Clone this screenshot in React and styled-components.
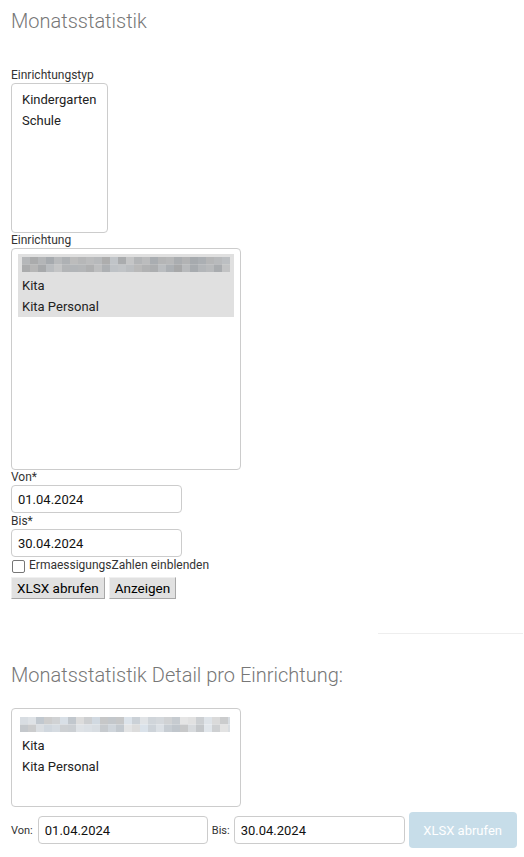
import React from "react";
import styled, { createGlobalStyle } from "styled-components";

const Global = createGlobalStyle`
  html, body { margin: 0; padding: 0; background: #fff; }
  body { font-family: Roboto, "Liberation Sans", sans-serif; font-size: 12px; color: #333; }
  * { box-sizing: border-box; }
`;

const Page = styled.div`
  width: 524px;
  padding: 0 0 40px 11px;
  display: flex;
  flex-direction: column;
  align-items: flex-start;
`;

const Title = styled.h1`
  margin: ${(p) => p.$mt}px 0 ${(p) => p.$mb}px;
  font-family: Roboto, sans-serif;
  font-weight: 300;
  font-size: 20px;
  line-height: 25px;
  color: #777;
`;

const FieldLabel = styled.label`
  display: block;
  font-size: 12px;
  line-height: 15px;
  color: #333;
`;

const ListBox = styled.div`
  width: ${(p) => p.$w}px;
  height: ${(p) => p.$h}px;
  border: 1px solid #ccc;
  border-radius: 4px;
  padding: 5px 6px;
  background: #fff;
  overflow: hidden;
`;

const Option = styled.div`
  height: 21px;
  line-height: 21px;
  padding: 0 4px;
  font-size: 13px;
  color: #222;
  white-space: nowrap;
  background: ${(p) => (p.$selected ? "#e0e0e0" : "transparent")};
  display: flex;
  align-items: center;
`;

const TextInput = styled.input`
  width: ${(p) => p.$w}px;
  height: 28px;
  margin: 0 0 ${(p) => p.$mb || 0}px;
  padding: 0 6px;
  border: 1px solid #ccc;
  border-radius: 4px;
  font-family: Roboto, sans-serif;
  font-size: 13px;
  color: #111;
  background: #fff;
  outline: none;
`;

const CheckRow = styled.label`
  display: flex;
  align-items: center;
  height: 15px;
  line-height: 15px;
  font-size: 12px;
  color: #333;
`;

const CheckBox = styled.input`
  appearance: none;
  width: 13px;
  height: 13px;
  margin: 1px 4px 0 1px;
  border: 1px solid #767676;
  border-radius: 2px;
  background: #fff;
`;

const ButtonRow = styled.div`
  display: flex;
  gap: 4px;
  margin-top: 4px;
`;

const PlainButton = styled.button`
  height: 22px;
  padding: 0 5px;
  font-family: Roboto, sans-serif;
  font-size: 13.5px;
  color: #000;
  background: #e1e1e1;
  border: 1px solid;
  border-color: #f0f0f0 #a8a8a8 #a8a8a8 #f0f0f0;
  border-radius: 0;
`;

const Divider = styled.hr`
  align-self: flex-end;
  width: 145px;
  height: 1px;
  margin: 34px 1px 0 0;
  border: 0;
  background: #eee;
`;

const InlineRow = styled.div`
  display: flex;
  align-items: center;
  gap: 4px;
  margin-top: 5px;
`;

const InlineLabel = styled.span`
  font-size: 11px;
  color: #333;
  margin-right: ${(p) => p.$mr || 0}px;
`;

const PrimaryButton = styled.button`
  width: 108px;
  height: 36px;
  border: 0;
  border-radius: 4px;
  background: #c7dde9;
  color: #fff;
  font-family: Roboto, sans-serif;
  font-size: 13px;
`;

function seeded(seed) {
  let s = seed;
  return () => {
    s = (s * 9301 + 49297) % 233280;
    return s / 233280;
  };
}

function Redacted({ width, light, seed, offset = 0 }) {
  const rnd = seeded(seed);
  const cols = Math.ceil(width / 8);
  const rows = 2;
  const cells = [];
  for (let r = 0; r < rows; r++) {
    for (let c = 0; c < cols; c++) {
      const v = rnd();
      const base = light ? 196 + Math.round(v * 34) : 168 + Math.round(v * 30);
      const tint = light ? Math.round(rnd() * 8) : Math.round(rnd() * 4);
      const col = `rgb(${base - tint},${base},${base + tint})`;
      cells.push(
        <rect key={`${r}-${c}`} x={c * 8} y={r * 7.5} width={8} height={7.5} fill={col} />
      );
    }
  }
  return (
    <svg width={width} height={15} style={{ display: "block", marginLeft: offset }} aria-hidden="true">
      {cells}
    </svg>
  );
}

export default function App() {
  return (
    <>
      <Global />
      <Page>
        <Title $mt={9} $mb={34}>Monatsstatistik</Title>

        <FieldLabel>Einrichtungstyp</FieldLabel>
        <ListBox $w={97} $h={150}>
          <Option>Kindergarten</Option>
          <Option>Schule</Option>
        </ListBox>

        <FieldLabel>Einrichtung</FieldLabel>
        <ListBox $w={230} $h={222}>
          <Option $selected><Redacted width={208} seed={7} /></Option>
          <Option $selected>Kita</Option>
          <Option $selected>Kita Personal</Option>
        </ListBox>

        <FieldLabel>Von*</FieldLabel>
        <TextInput $w={171} $mb={1} defaultValue="01.04.2024" />
        <FieldLabel>Bis*</FieldLabel>
        <TextInput $w={171} $mb={1} defaultValue="30.04.2024" />

        <CheckRow>
          <CheckBox type="checkbox" />
          ErmaessigungsZahlen einblenden
        </CheckRow>

        <ButtonRow>
          <PlainButton>XLSX abrufen</PlainButton>
          <PlainButton>Anzeigen</PlainButton>
        </ButtonRow>

        <Divider />

        <Title $mt={29} $mb={20}>Monatsstatistik Detail pro Einrichtung:</Title>

        <ListBox $w={230} $h={99}>
          <Option><Redacted width={211} light seed={13} offset={-2} /></Option>
          <Option>Kita</Option>
          <Option>Kita Personal</Option>
        </ListBox>

        <InlineRow>
          <InlineLabel $mr={1}>Von:</InlineLabel>
          <TextInput $w={170} defaultValue="01.04.2024" />
          <InlineLabel>Bis:</InlineLabel>
          <TextInput $w={171} defaultValue="30.04.2024" />
          <PrimaryButton disabled>XLSX abrufen</PrimaryButton>
        </InlineRow>
      </Page>
    </>
  );
}
